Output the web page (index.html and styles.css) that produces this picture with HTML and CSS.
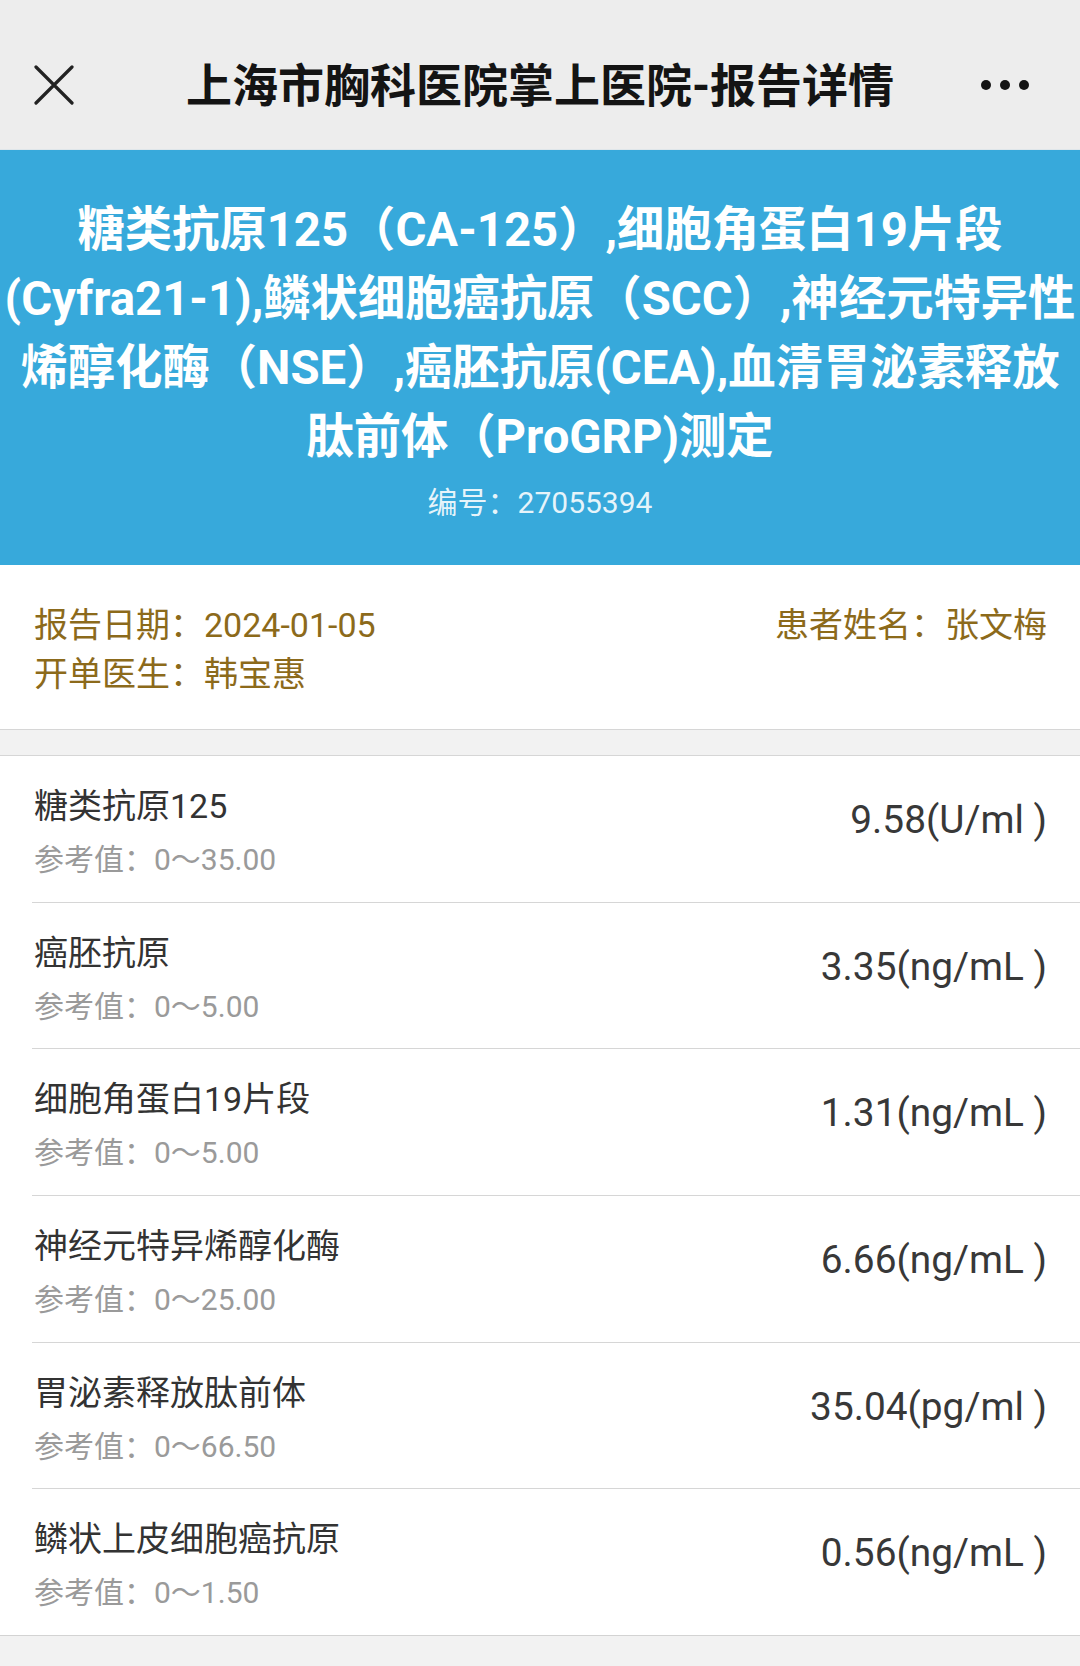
FILE: index.html
```html
<!DOCTYPE html>
<html lang="zh-CN">
<head>
<meta charset="utf-8">
<title>报告详情</title>
<link rel="stylesheet" href="styles.css">
</head>
<body>
<header class="topbar">
  <div class="topbar-left">
    <svg class="icon-close" width="40" height="40" viewBox="0 0 40 40" aria-label="关闭">
      <path d="M2 2 L38 38 M38 2 L2 38" stroke="#222" stroke-width="3.2" stroke-linecap="round" fill="none"/>
    </svg>
  </div>
  <h1 class="topbar-title">上海市胸科医院掌上医院-报告详情</h1>
  <div class="topbar-right">
    <span class="dot"></span><span class="dot"></span><span class="dot"></span>
  </div>
</header>

<section class="banner">
  <h2 class="banner-title">糖类抗原125（CA-125）,细胞角蛋白19片段<br>(Cyfra21-1),鳞状细胞癌抗原（SCC）,神经元特异性<br>烯醇化酶（NSE）,癌胚抗原(CEA),血清胃泌素释放<br>肽前体（ProGRP)测定</h2>
  <p class="banner-no">编号：27055394</p>
</section>

<section class="info">
  <div class="info-row">
    <span>报告日期：2024-01-05</span>
    <span>患者姓名：张文梅</span>
  </div>
  <div class="info-row">
    <span>开单医生：韩宝惠</span>
  </div>
</section>

<div class="gap"></div>

<section class="results">
  <div class="item">
    <div class="item-main">
      <div class="item-name">糖类抗原125</div>
      <div class="item-ref">参考值：0～35.00</div>
    </div>
    <div class="item-value">9.58(U/ml )</div>
  </div>
  <div class="item">
    <div class="item-main">
      <div class="item-name">癌胚抗原</div>
      <div class="item-ref">参考值：0～5.00</div>
    </div>
    <div class="item-value">3.35(ng/mL )</div>
  </div>
  <div class="item">
    <div class="item-main">
      <div class="item-name">细胞角蛋白19片段</div>
      <div class="item-ref">参考值：0～5.00</div>
    </div>
    <div class="item-value">1.31(ng/mL )</div>
  </div>
  <div class="item">
    <div class="item-main">
      <div class="item-name">神经元特异烯醇化酶</div>
      <div class="item-ref">参考值：0～25.00</div>
    </div>
    <div class="item-value">6.66(ng/mL )</div>
  </div>
  <div class="item">
    <div class="item-main">
      <div class="item-name">胃泌素释放肽前体</div>
      <div class="item-ref">参考值：0～66.50</div>
    </div>
    <div class="item-value">35.04(pg/ml )</div>
  </div>
  <div class="item">
    <div class="item-main">
      <div class="item-name">鳞状上皮细胞癌抗原</div>
      <div class="item-ref">参考值：0～1.50</div>
    </div>
    <div class="item-value">0.56(ng/mL )</div>
  </div>
</section>
</body>
</html>
```
FILE: styles.css
```css
* { box-sizing: border-box; }
html, body { margin: 0; padding: 0; }
body {
  width: 1080px;
  min-height: 1666px;
  background: #f2f2f2;
  font-family: Roboto, "Noto Sans CJK SC", "Noto Sans", sans-serif;
  color: #333;
}

.topbar {
  height: 150px;
  padding-top: 20px;
  background: #ededed;
  display: grid;
  grid-template-columns: 1fr auto 1fr;
  align-items: center;
  border-bottom: 1px solid #dfe6ea;
}
.topbar-left { padding-left: 34px; display: flex; align-items: center; }
.icon-close { display: block; }
.topbar-title {
  margin: 0;
  font-size: 46px;
  font-weight: 700;
  color: #141414;
  line-height: 60px;
  white-space: nowrap;
  padding-top: 3px;
}
.topbar-right {
  display: flex;
  justify-content: flex-end;
  align-items: center;
  gap: 9px;
  padding-right: 51px;
}
.dot {
  width: 10px;
  height: 10px;
  border-radius: 50%;
  background: #151515;
}

.banner {
  background: #37a9db;
  height: 415px;
  padding-top: 46px;
  text-align: center;
  color: #fff;
}
.banner-title {
  margin: 0;
  font-size: 47.3px;
  font-weight: 700;
  line-height: 69px;
  white-space: nowrap;
}
.banner-no {
  margin: 11px 0 0;
  font-size: 30px;
  line-height: 40px;
  color: rgba(255, 255, 255, 0.88);
}

.info {
  background: #fff;
  height: 165px;
  padding: 36px 33px 0 34px;
  color: #8c6a1b;
  font-size: 34px;
  line-height: 49px;
  border-bottom: 1px solid #d6d6d6;
}
.info-row {
  display: flex;
  justify-content: space-between;
}

.gap {
  height: 26px;
  background: #f2f2f2;
  border-bottom: 1px solid #d6d6d6;
}

.results {
  background: #fff;
  border-bottom: 1px solid #d3d3d3;
}
.item {
  margin-left: 32px;
  padding-right: 33px;
  height: 146.7px;
  display: flex;
  justify-content: space-between;
  align-items: flex-start;
  border-bottom: 1px solid #d6d6d6;
}
.item:last-child { border-bottom: none; height: 145.7px; }
.item-main { padding-top: 27px; padding-left: 2px; }
.item-name {
  font-size: 34px;
  line-height: 46px;
  color: #333;
}
.item-ref {
  margin-top: 9px;
  font-size: 30px;
  line-height: 44px;
  color: #9a9a9a;
}
.item-value {
  margin-top: 41px;
  font-size: 38.8px;
  line-height: 46px;
  color: #383838;
  white-space: nowrap;
}
```
